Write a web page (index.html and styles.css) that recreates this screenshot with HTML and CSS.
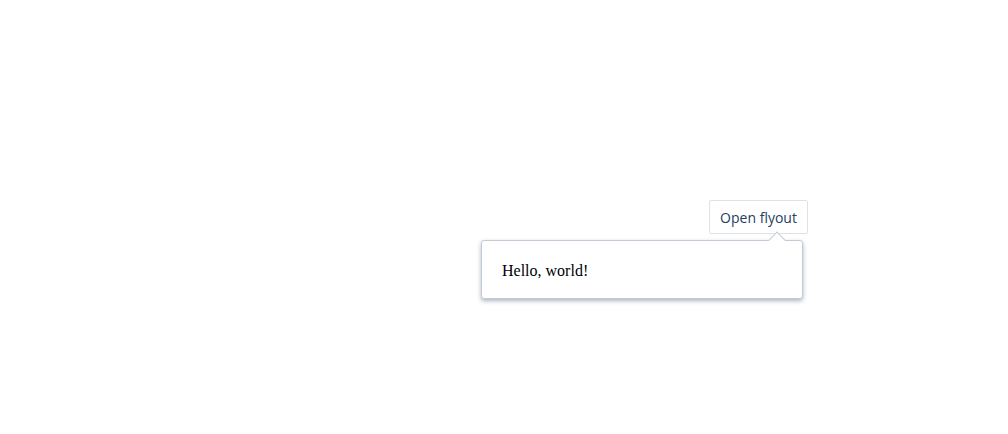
FILE: index.html
```html
<!DOCTYPE html>
<html>
<head>
<meta charset="utf-8">
<link rel="stylesheet" href="styles.css">
</head>
<body>
<div class="stage">
  <div class="anchor">
    <button class="trigger" type="button">Open flyout</button>
    <div class="flyout">
      <span class="arrow"></span>
      <p class="flyout-text">Hello, world!</p>
    </div>
  </div>
</div>
</body>
</html>
```

FILE: styles.css
```css
html, body {
  margin: 0;
  padding: 0;
  background: #fff;
}
.stage {
  padding: 200px 0 0 709px;
  height: 434px;
  box-sizing: border-box;
}
.anchor {
  position: relative;
  display: inline-block;
}
.trigger {
  display: block;
  box-sizing: border-box;
  width: 99px;
  height: 34px;
  margin: 0;
  padding: 0 10px;
  background: #fff;
  border: 1px solid #dde2e8;
  border-radius: 2px;
  font-family: "Open Sans", "Noto Sans", sans-serif;
  font-size: 14px;
  color: #24405f;
  cursor: pointer;
}
.flyout {
  position: absolute;
  top: 40px;
  right: 5px;
  width: 322px;
  height: 59px;
  box-sizing: border-box;
  background: #fff;
  border: 1px solid #c3ccd6;
  border-radius: 3px;
  box-shadow: 0 2px 4px rgba(40, 60, 90, 0.38);
  padding: 0 20px;
  display: flex;
  align-items: center;
}
.arrow {
  position: absolute;
  top: -7px;
  right: 19px;
  width: 11px;
  height: 11px;
  background: #fff;
  border-top: 1px solid #c3ccd6;
  border-left: 1px solid #c3ccd6;
  transform: rotate(45deg);
}
.flyout-text {
  margin: 0;
  font-family: "Liberation Serif", "Times New Roman", serif;
  font-size: 16px;
  color: #000;
  position: relative;
  top: 1px;
}
```
